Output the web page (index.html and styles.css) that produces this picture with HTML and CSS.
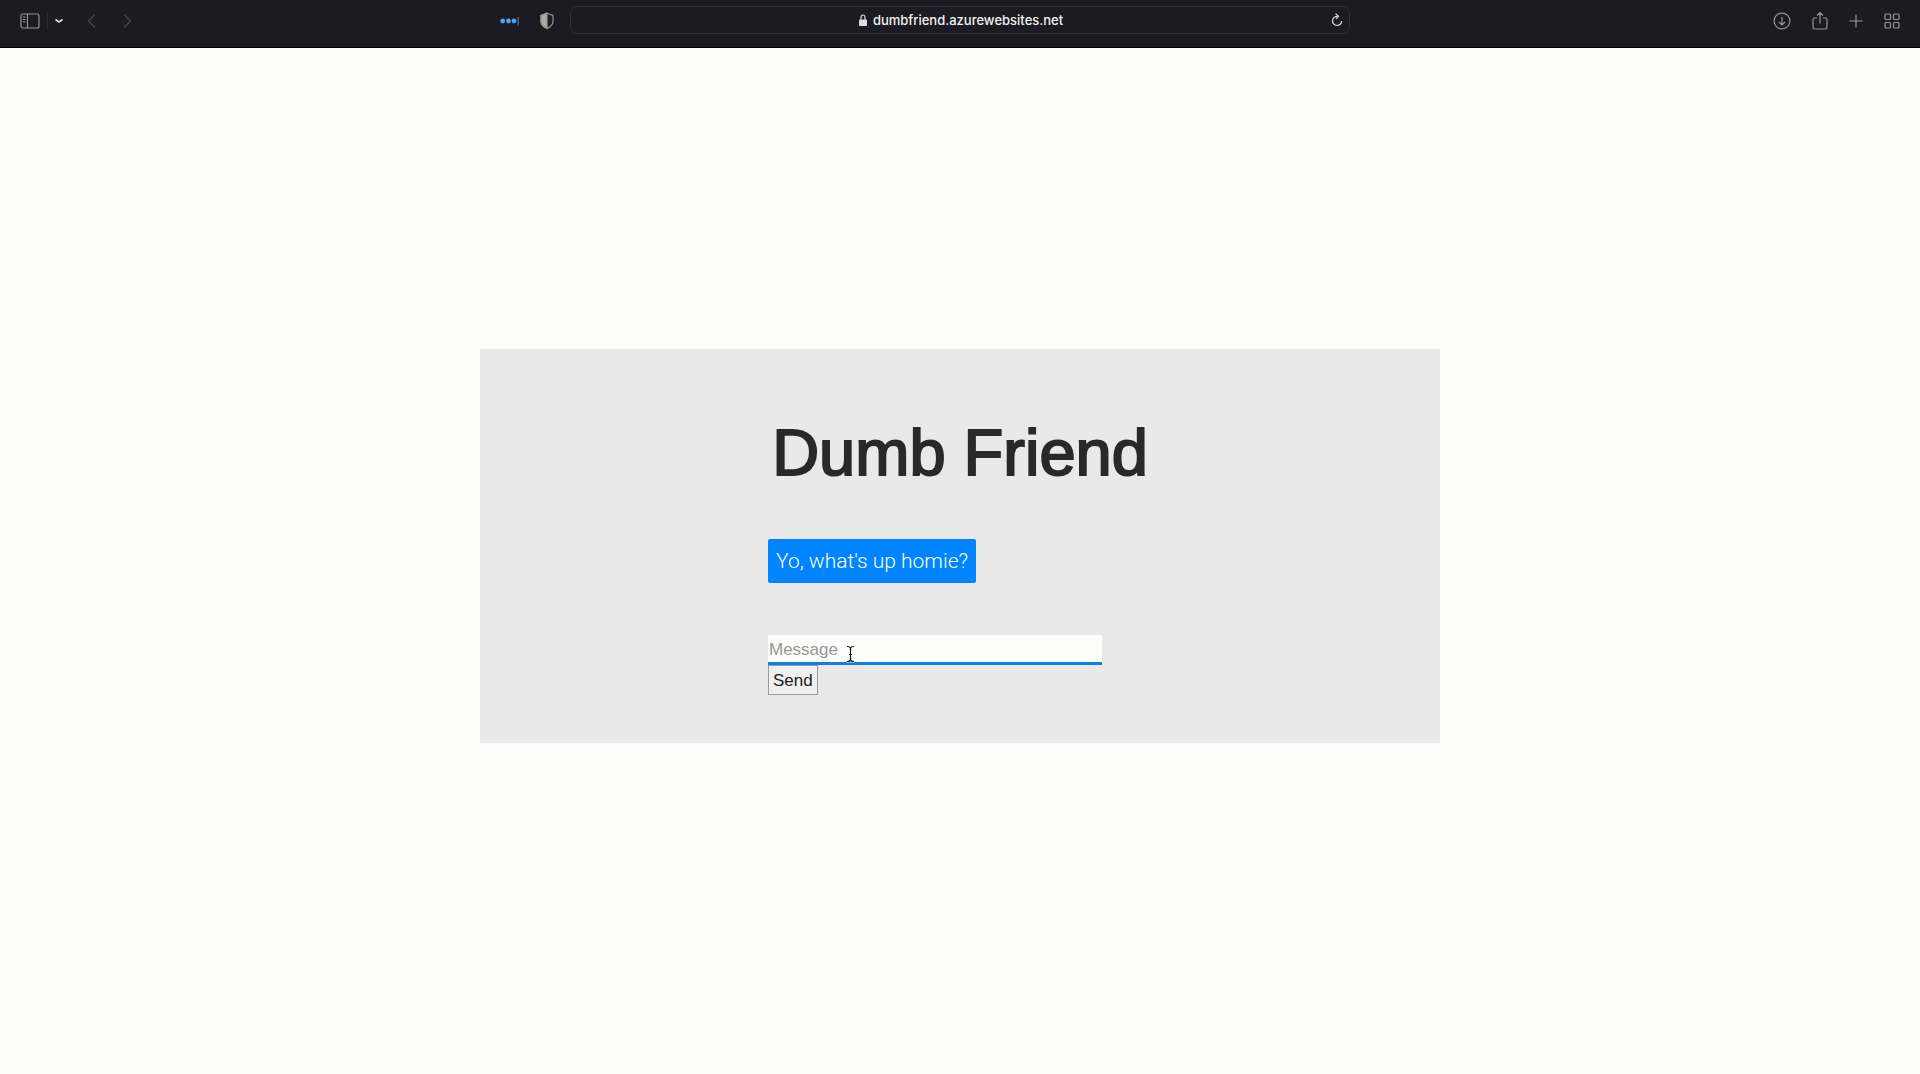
FILE: index.html
```html
<!DOCTYPE html>
<html lang="en">
<head>
<meta charset="utf-8">
<title>Dumb Friend</title>
<link rel="stylesheet" href="styles.css">
</head>
<body>
<header class="toolbar">
  <div class="side">
    <div class="group">
      <button class="tool" aria-label="Sidebar"><svg width="20" height="16" viewBox="0 0 20 16"><rect x="1" y="1" width="18" height="14" rx="2"/><path d="M7.500 1v14M3 4h2.500M3 6.500h2.500M3 9h2.500"/></svg></button>
      <span class="divider"></span>
      <button class="tool bright" aria-label="Tab groups"><svg width="8" height="8" viewBox="0 0 8 8"><path d="M.500 2.500 4 5l3.500-2.500" stroke-width="1.600"/></svg></button>
    </div>
    <div class="group history">
      <button class="tool dim" aria-label="Back" disabled><svg width="9" height="16" viewBox="0 0 9 16"><path d="M8 1.500 1.500 8 8 14.500"/></svg></button>
      <button class="tool dim" aria-label="Forward" disabled><svg width="9" height="16" viewBox="0 0 9 16"><path d="M1 1.500 7.500 8 1 14.500"/></svg></button>
    </div>
    <div class="group extensions">
      <button class="tool" aria-label="Password manager"><svg width="20" height="10" viewBox="0 0 20 10"><g fill="#4aa3f0" stroke="none"><circle cx="2.700" cy="5" r="2.400"/><circle cx="8.500" cy="5" r="2.400"/><circle cx="14" cy="5" r="2.400"/></g><path d="M18.200 1v8.500" stroke="#3a6a9a" stroke-width="1.500"/></svg></button>
      <button class="tool" aria-label="Privacy report"><svg width="14" height="18" viewBox="0 0 14 18"><path d="M7 1.200 13 3.500v6c0 3.500-3 5.500-6 7-3-1.500-6-3.500-6-7v-6z"/><path d="M7 1.200v15.300c-3-1.500-6-3.500-6-7v-6z" fill="#aaa8a6"/></svg></button>
    </div>
  </div>
  <div class="address">
    <a class="url" href="#"><svg width="8" height="12" viewBox="0 0 8 12"><path d="M2 6V3.200a2 2.200 0 0 1 4 0V6" fill="none" stroke="#dddddd" stroke-width="1.200"/><rect y="5.500" width="8" height="6.500" rx="1" fill="#dddddd"/></svg>dumbfriend.azurewebsites.net</a>
    <button class="tool reload" aria-label="Reload"><svg width="12" height="14" viewBox="0 0 12 14"><path d="M6.500 3.300a4.600 4.600 0 1 0 4.200 4.700M4.500 .800l3 2.500-2.500 2.500"/></svg></button>
  </div>
  <div class="side actions">
    <button class="tool" aria-label="Downloads"><svg width="18" height="18" viewBox="0 0 18 18"><circle cx="9" cy="9" r="7.900"/><path d="M9 5v8M6 10l3 3 3-3"/></svg></button>
    <button class="tool share" aria-label="Share"><svg width="16" height="20" viewBox="0 0 16 20"><path d="M5 7H2.500A1.500 1.500 0 0 0 1 8.500v8A1.500 1.500 0 0 0 2.500 18h11a1.500 1.500 0 0 0 1.500-1.500v-8A1.500 1.500 0 0 0 13.500 7H11M8 12.500V1.500M5 4.500l3-3 3 3"/></svg></button>
    <button class="tool" aria-label="New tab"><svg width="14" height="14" viewBox="0 0 14 14"><path d="M7 .500v13M.500 7h13"/></svg></button>
    <button class="tool" aria-label="Tab overview"><svg width="16" height="16" viewBox="0 0 16 16"><rect x="1" y="1" width="5.500" height="5.500" rx="1"/><rect x="9.500" y="1" width="5.500" height="5.500" rx="1"/><rect x="1" y="9.500" width="5.500" height="5.500" rx="1"/><rect x="9.500" y="9.500" width="5.500" height="5.500" rx="1"/></svg></button>
  </div>
</header>
<main class="page">
  <section class="card">
    <div class="chat">
      <h1 class="title">Dumb Friend</h1>
      <p class="bubble">Yo, what's up homie?</p>
      <form class="form">
        <div class="field">
          <input class="message" type="text" placeholder="Message" aria-label="Message">
          <svg class="caret" width="9" height="18" viewBox="0 0 9 18"><g fill="none"><path d="M1 1.500c2 0 3.500.500 3.500 2v11c0 1.500-1.500 2-3.500 2M8 1.500c-2 0-3.500.500-3.500 2v11c0 1.500 1.500 2 3.500 2M3 9.500h3" stroke="#fff" stroke-width="2.500"/><path d="M1 1.500c2 0 3.500.500 3.500 2v11c0 1.500-1.500 2-3.500 2M8 1.500c-2 0-3.500.500-3.500 2v11c0 1.500 1.500 2 3.500 2M3 9.500h3" stroke="#111" stroke-width="1.200"/></g></svg>
        </div>
        <button class="send" type="button">Send</button>
      </form>
    </div>
  </section>
</main>
</body>
</html>
```

FILE: styles.css
```css
* { box-sizing: border-box; }

body {
  margin: 0;
  min-height: 100vh;
  display: flex;
  flex-direction: column;
  background: #fdfdfb;
  color: #292929;
  font-family: "Liberation Sans", Arial, sans-serif;
}

.toolbar {
  display: grid;
  grid-template-columns: 1fr 41.5% 1fr;
  column-gap: 16px;
  height: 48px;
  padding: 1px 20px 6px;
  background: #1c1a22;
  border-bottom: 1px solid #000;
}

.side, .group { display: flex; align-items: center; }
.group { gap: 7px; }
.history { gap: 27px; margin-left: 24px; }
.extensions { gap: 20px; margin-left: auto; }
.actions { justify-content: flex-end; gap: 21px; }

.tool {
  display: flex;
  padding: 0;
  border: 0;
  background: none;
  color: #989690;
}
.tool svg { fill: none; stroke: currentColor; stroke-width: 1.2; }
.bright { color: #dddddd; }
.dim { color: #4a4943; }
.divider { width: 1px; height: 18px; background: #2c2a32; }

.address {
  display: flex;
  align-items: center;
  height: 28px;
  margin-top: 5px;
  padding: 0 6px;
  border: 1px solid #35333a;
  border-radius: 7px;
}
.url {
  flex: 1;
  display: flex;
  align-items: center;
  justify-content: center;
  gap: 6px;
  padding-left: 14px;
  color: #f2f2f2;
  font: 500 13px/16px Inter, sans-serif;
  text-decoration: none;
}
.reload { color: #dddddd; }

.page {
  flex: 1;
  display: flex;
  align-items: center;
  justify-content: center;
  padding-bottom: 30px;
}
.card {
  width: 50%;
  padding: 64px 0 48px;
  background: #e9e9e9;
}
.chat { width: 40%; margin: 0 auto; }
.title {
  margin: 0 0 46px;
  font-size: 65px;
  line-height: 80px;
  font-weight: 400;
  text-align: center;
  white-space: nowrap;
  -webkit-text-stroke: 2px #292929;
}
.bubble {
  width: fit-content;
  margin: 0 0 52px;
  padding: 10px 8px;
  border-radius: 2px;
  background: #0084ff;
  color: #fff;
  font: 300 21px/24px Roboto, sans-serif;
}
.field { position: relative; width: 334px; }
.message {
  display: block;
  width: 100%;
  height: 30px;
  padding: 2px 1px 0;
  border: 0;
  border-bottom: 3px solid #0f7fe8;
  background: #fdfdfb;
  font: 17px/20px "Liberation Sans", Arial, sans-serif;
}
.message::placeholder { color: #969696; }
.caret { position: absolute; left: 78px; top: 10px; }
.send {
  display: block;
  height: 30px;
  padding: 2px 4px 0;
  border: 1px solid #9a9a9a;
  background: #efefef;
  color: #222;
  font: 17px/20px "Liberation Sans", Arial, sans-serif;
}
```
